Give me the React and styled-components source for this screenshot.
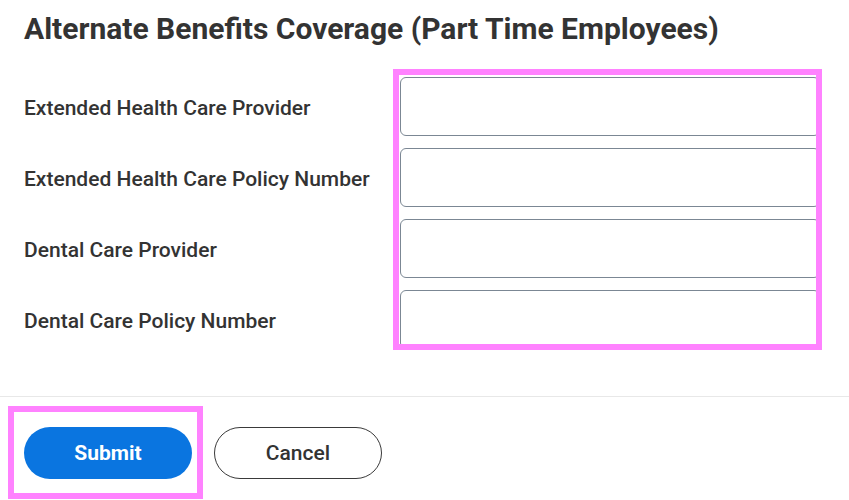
import React from "react";
import styled, { createGlobalStyle } from "styled-components";

const Global = createGlobalStyle`
  html, body { margin: 0; padding: 0; background: #ffffff; }
  body { font-family: Roboto, "Liberation Sans", Arial, sans-serif; color: #333333; }
  * { box-sizing: border-box; }
`;

const Page = styled.div`
  width: 849px;
  height: 500px;
  overflow: hidden;
  display: flex;
  flex-direction: column;
`;

const Content = styled.div`
  padding: 11px 0 0 24px;
`;

const Title = styled.h1`
  margin: 0;
  font-size: 30px;
  line-height: 36px;
  font-weight: 700;
  color: #333333;
`;

const Form = styled.div`
  display: flex;
  margin-top: 22px;
`;

const Labels = styled.div`
  width: 369px;
  display: flex;
  flex-direction: column;
  gap: 12px;
  padding-top: 8px;
`;

const Label = styled.label`
  height: 59px;
  display: flex;
  align-items: center;
  padding-top: 2px;
  font-size: 21px;
  font-weight: 500;
  color: #333333;
`;

const Highlight = styled.div`
  width: 429px;
  height: 281px;
  border: 6px solid #ff82ff;
  overflow: hidden;
  padding: 2px 0 0 1px;
  display: flex;
  flex-direction: column;
  gap: 12px;
`;

const Input = styled.input`
  flex: none;
  width: 420px;
  height: 59px;
  border: 1px solid #7b8794;
  border-radius: 6px;
  background: #ffffff;
  outline: none;
  font-family: inherit;
  font-size: 16px;
  padding: 0 12px;
`;

const Footer = styled.div`
  margin-top: 46px;
  border-top: 1px solid #e8e8e8;
  padding: 9px 0 0 8px;
`;

const ButtonRow = styled.div`
  display: flex;
  align-items: flex-start;
`;

const ButtonHighlight = styled.div`
  width: 195px;
  height: 93px;
  border: 6px solid #ff82ff;
  padding: 15px 0 0 10px;
`;

const CancelWrap = styled.div`
  margin-left: 11px;
  padding-top: 21px;
`;

const Button = styled.button`
  flex: none;
  width: 168px;
  height: 52px;
  border-radius: 26px;
  font-family: inherit;
  font-size: 21px;
  font-weight: ${(p) => (p.$primary ? 700 : 500)};
  color: ${(p) => (p.$primary ? "#ffffff" : "#333333")};
  background: ${(p) => (p.$primary ? "#0a75e0" : "#ffffff")};
  border: ${(p) => (p.$primary ? "none" : "1.5px solid #3a3a3a")};
  cursor: pointer;
  padding: 0;
`;

const fields = [
  "Extended Health Care Provider",
  "Extended Health Care Policy Number",
  "Dental Care Provider",
  "Dental Care Policy Number",
];

export default function App() {
  return (
    <>
      <Global />
      <Page>
        <Content>
          <Title>Alternate Benefits Coverage (Part Time Employees)</Title>
          <Form>
            <Labels>
              {fields.map((f) => (
                <Label key={f}>{f}</Label>
              ))}
            </Labels>
            <Highlight>
              {fields.map((f) => (
                <Input key={f} aria-label={f} />
              ))}
            </Highlight>
          </Form>
        </Content>
        <Footer>
          <ButtonRow>
            <ButtonHighlight>
              <Button $primary>Submit</Button>
            </ButtonHighlight>
            <CancelWrap>
              <Button>Cancel</Button>
            </CancelWrap>
          </ButtonRow>
        </Footer>
      </Page>
    </>
  );
}
